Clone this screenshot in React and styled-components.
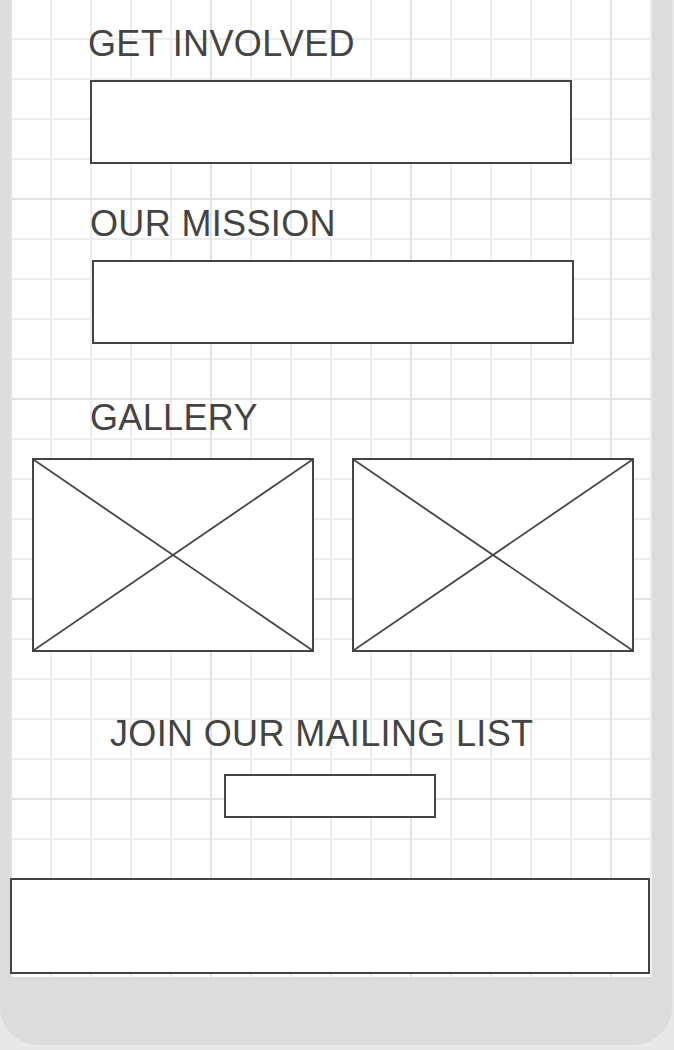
import React from 'react';
import styled, { createGlobalStyle } from 'styled-components';

const GlobalStyle = createGlobalStyle`
	html, body {
		margin: 0;
		padding: 0;
		background: #e8e8e8;
	}
	body {
		font-family: "Liberation Sans", Arial, sans-serif;
	}
`;

const Frame = styled.div`
	width: 672px;
	height: 1045px;
	box-sizing: border-box;
	padding-left: 10px;
	background: #dcdcdc;
	border-radius: 0 0 38px 38px;
`;

const Canvas = styled.main`
	width: 642px;
	height: 977px;
	display: flex;
	flex-direction: column;
	align-items: flex-start;
	background-color: #fff;
	background-image:
		linear-gradient(to right, #e2e2e2 2px, transparent 2px),
		linear-gradient(to bottom, #e2e2e2 2px, transparent 2px),
		linear-gradient(to right, #ededed 2px, transparent 2px),
		linear-gradient(to bottom, #ededed 2px, transparent 2px);
	background-size: 200px 200px, 200px 200px, 40px 40px, 40px 40px;
	background-position: 0 -2px;
`;

const Heading = styled.h2`
	margin: ${(p) => p.$top}px 0 0 ${(p) => p.$left}px;
	font-size: 36px;
	font-weight: normal;
	line-height: 40px;
	letter-spacing: 0.35px;
	color: #444;
	white-space: nowrap;
`;

const Block = styled.div`
	margin: ${(p) => p.$top}px 0 0 ${(p) => p.$left}px;
	width: ${(p) => p.$w}px;
	height: ${(p) => p.$h}px;
	box-sizing: border-box;
	border: 2px solid #444;
	background: #fff;
`;

const Gallery = styled.div`
	display: flex;
	gap: 38px;
	margin: 20px 0 0 22px;
`;

const Photo = styled.div`
	width: 282px;
	height: 194px;
	box-sizing: border-box;
	border: 2px solid #444;
	background: #fff;

	& svg {
		display: block;
		width: 100%;
		height: 100%;
	}
`;

const Placeholder = () => (
	<Photo>
		<svg viewBox="0 0 100 100" preserveAspectRatio="none">
			<line x1="0" y1="0" x2="100" y2="100" stroke="#444" strokeWidth="1.8" vectorEffect="non-scaling-stroke" />
			<line x1="100" y1="0" x2="0" y2="100" stroke="#444" strokeWidth="1.8" vectorEffect="non-scaling-stroke" />
		</svg>
	</Photo>
);

const App = () => (
	<>
		<GlobalStyle />
		<Frame>
			<Canvas>
				<Heading $top={24} $left={78}>GET INVOLVED</Heading>
				<Block $top={16} $left={80} $w={482} $h={84} />

				<Heading $top={40} $left={80}>OUR MISSION</Heading>
				<Block $top={16} $left={82} $w={482} $h={84} />

				<Heading $top={54} $left={80}>GALLERY</Heading>
				<Gallery>
					<Placeholder />
					<Placeholder />
				</Gallery>

				<Heading $top={62} $left={100}>JOIN OUR MAILING LIST</Heading>
				<Block $top={20} $left={214} $w={212} $h={44} />

				<Block $top={60} $left={0} $w={640} $h={96} />
			</Canvas>
		</Frame>
	</>
);

export default App;
